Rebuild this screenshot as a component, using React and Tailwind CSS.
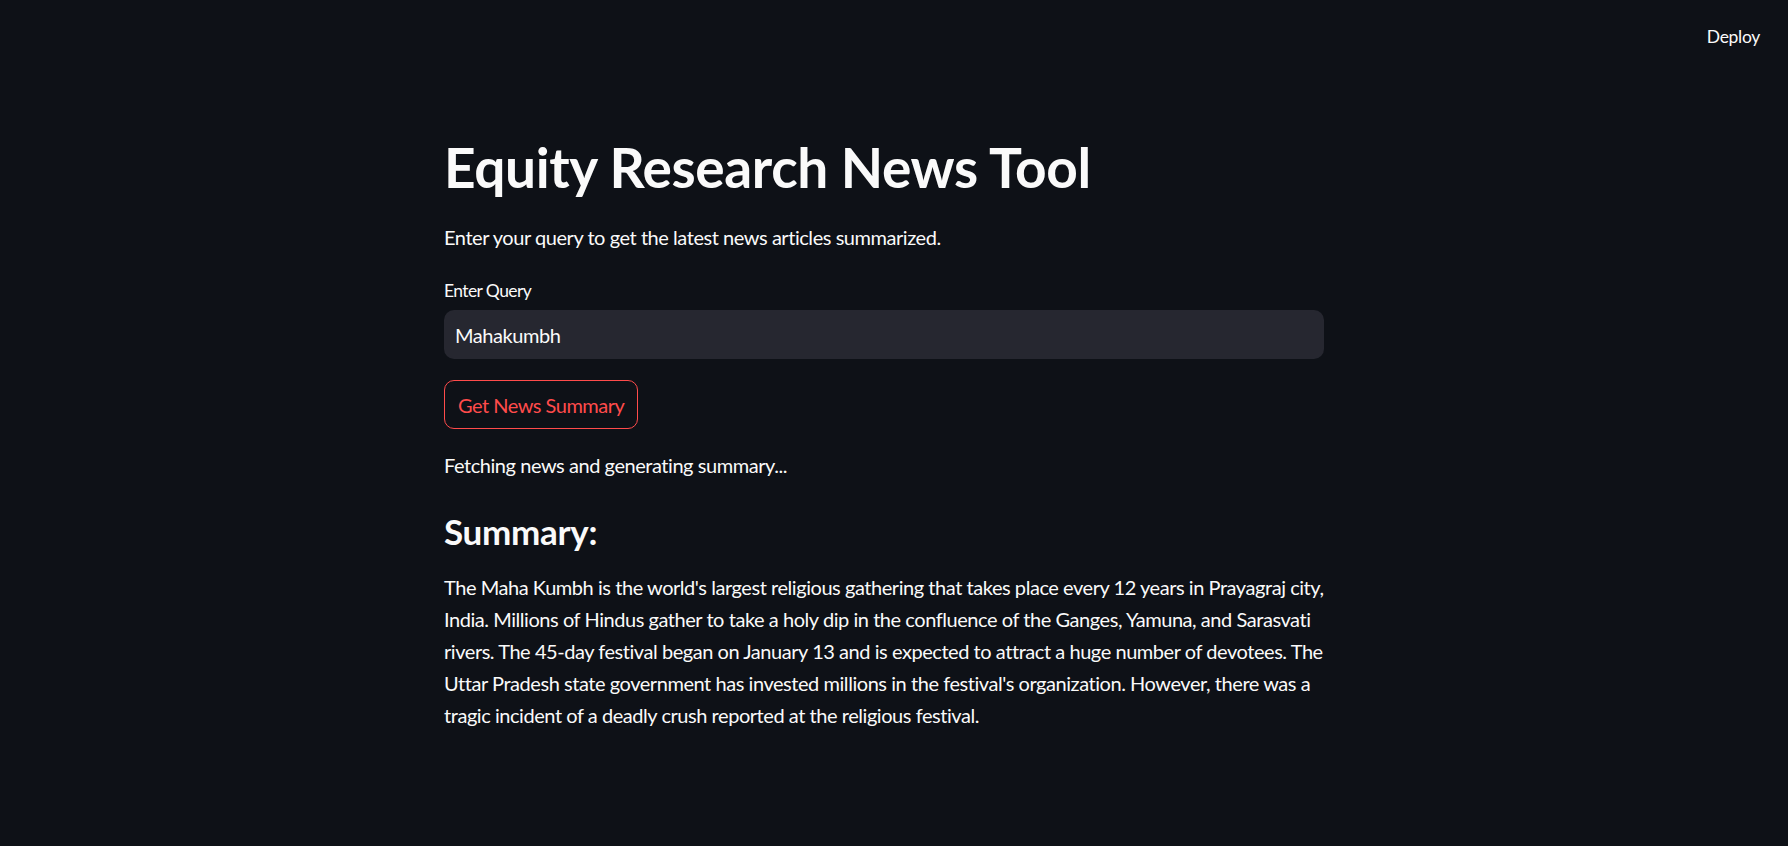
export default function App() {
  const summary =
    "The Maha Kumbh is the world's largest religious gathering that takes place every 12 years in Prayagraj city, India. Millions of Hindus gather to take a holy dip in the confluence of the Ganges, Yamuna, and Sarasvati rivers. The 45-day festival began on January 13 and is expected to attract a huge number of devotees. The Uttar Pradesh state government has invested millions in the festival's organization. However, there was a tragic incident of a deadly crush reported at the religious festival.";

  return (
    <main
      className="min-h-screen bg-[#0e1117] text-[#fafafa]"
      style={{ fontFamily: "Lato, 'Noto Sans', sans-serif" }}
    >
      <header className="h-[75px] flex items-center justify-end pr-[28px]">
        <button className="text-[17.5px] tracking-[-0.3px] text-[#fafafa]">Deploy</button>
      </header>

      <div className="flex justify-center pr-[20px]">
        <div className="w-[880px] pt-[59px] pb-[120px] tracking-[-0.45px]">
          <h1 className="text-[55px] font-bold leading-[66px] tracking-[-0.4px]">
            Equity Research News Tool
          </h1>
          <p className="mt-[21px] text-[20px] leading-[32px]">
            Enter your query to get the latest news articles summarized.
          </p>

          <label className="block mt-[25px] text-[17.5px] leading-[25px] tracking-[-0.6px]">
            Enter Query
          </label>
          <input
            type="text"
            defaultValue="Mahakumbh"
            className="mt-[7px] w-full h-[49px] rounded-[10px] bg-[#262730] px-[11px] text-[20px] text-[#fafafa] tracking-[-0.45px] outline-none"
          />

          <button className="mt-[21px] h-[49px] px-[13px] rounded-[10px] border border-[#ff4b4b] text-[20px] text-[#ff4b4b] tracking-[-0.5px]">
            Get News Summary
          </button>

          <p className="mt-[20px] text-[20px] leading-[32px]">
            Fetching news and generating summary...
          </p>

          <h3 className="mt-[29px] text-[35px] font-bold leading-[42px] tracking-[-0.3px]">
            Summary:
          </h3>
          <p className="mt-[19px] text-[20px] leading-[32px]">{summary}</p>
        </div>
      </div>
    </main>
  );
}
